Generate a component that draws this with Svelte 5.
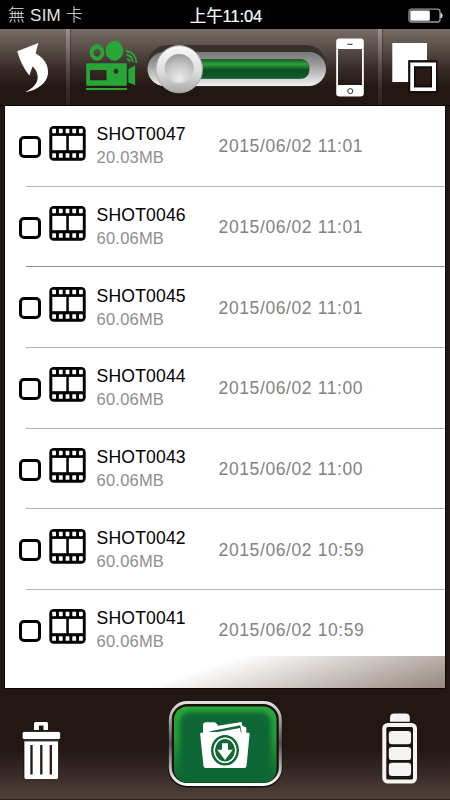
<script>
    let shots = [
        { name: 'SHOT0047', size: '20.03MB', date: '2015/06/02 11:01' },
        { name: 'SHOT0046', size: '60.06MB', date: '2015/06/02 11:01' },
        { name: 'SHOT0045', size: '60.06MB', date: '2015/06/02 11:01' },
        { name: 'SHOT0044', size: '60.06MB', date: '2015/06/02 11:00' },
        { name: 'SHOT0043', size: '60.06MB', date: '2015/06/02 11:00' },
        { name: 'SHOT0042', size: '60.06MB', date: '2015/06/02 10:59' },
        { name: 'SHOT0041', size: '60.06MB', date: '2015/06/02 10:59' },
    ];
    let selected = {};

    const holes = [0, 1, 2, 3, 4];

    function toggle(name){
        selected[name] = !selected[name];
    }
</script>

<div class="screen">
    <div class="status">
        <span class="carrier">無 SIM 卡</span>
        <span class="time">上午11:04</span>
        <svg class="power" width="36" height="16" viewBox="0 0 36 16">
            <rect x="1" y="1.2" width="31" height="12.8" rx="2.5" fill="none" stroke="#9b9b9b" stroke-width="1.3"/>
            <rect x="2.3" y="2.6" width="19.5" height="10.2" rx="1" fill="#fff"/>
            <path d="M33 5.2q2.6 2.4 0 4.8z" fill="#ddd" stroke="#ddd"/>
        </svg>
    </div>

    <header>
        <button class="back" title="Back">
            <svg width="66" height="76" viewBox="0 29 66 76">
                <path d="M17.3 51.3L38.3 43L35.6 53.5C44 58 48.6 65 48 73.5C47.2 83 37 90.5 25 92.3C34 87.5 38 83 37.7 76.5C37.4 72 35.5 69 32.5 66.5L29.3 75.5Q20.8 65 17.3 51.3z" fill="#fff"/>
            </svg>
        </button>
        <i class="divider"></i>
        <div class="source">
            <svg class="camera" width="76" height="76" viewBox="71 29 76 76">
                <g fill="#27a737">
                    <path fill-rule="evenodd" d="M97 44.3a7.3 8.2 0 1 0 .01 0zM97 48.8a3.6 4 0 1 1-.01 0z"/>
                    <ellipse cx="114.4" cy="50.8" rx="8.7" ry="10"/>
                    <path fill-rule="evenodd" d="M87 63.3h39q.8 0 .8.8v20.8q0 .8-.8.8H87q-.8 0-.8-.8V64.1q0-.8.8-.8zM90 70v10.3h16.5V70zM116 68.7a2.4 2.5 0 1 0 .01 0z"/>
                    <path d="M128.3 69l6.8-3.5V85l-6.8-2.5z"/>
                    <rect x="86" y="88" width="41" height="2"/>
                </g>
                <g fill="none" stroke="#27a737" stroke-width="1.8">
                    <path d="M126 51c6 .5 10 5 10.4 12"/>
                    <path d="M126.5 55c4 .4 6 3 6.2 7"/>
                    <path d="M127 59q2.3.2 2.4 2.8"/>
                </g>
            </svg>
            <svg class="slider" width="184" height="76" viewBox="147 29 184 76">
                <defs>
                    <linearGradient id="rim" x1="0" y1="0" x2="0" y2="1">
                        <stop offset="0" stop-color="#777"/>
                        <stop offset=".35" stop-color="#999"/>
                        <stop offset=".75" stop-color="#d0d0d0"/>
                        <stop offset="1" stop-color="#f2f2f2"/>
                    </linearGradient>
                    <linearGradient id="fill" x1="0" y1="0" x2="0" y2="1">
                        <stop offset="0" stop-color="#155c29"/>
                        <stop offset=".25" stop-color="#2aa438"/>
                        <stop offset=".55" stop-color="#104b24"/>
                        <stop offset="1" stop-color="#08622f"/>
                    </linearGradient>
                    <linearGradient id="knob" x1="0" y1="0" x2="0" y2="1">
                        <stop offset="0" stop-color="#fafafa"/>
                        <stop offset=".6" stop-color="#d9d9d9"/>
                        <stop offset="1" stop-color="#a9aaaa"/>
                    </linearGradient>
                    <radialGradient id="dish" cx=".5" cy=".85" r=".85">
                        <stop offset="0" stop-color="#ececec"/>
                        <stop offset=".6" stop-color="#c3c5c4"/>
                        <stop offset="1" stop-color="#999c9a"/>
                    </radialGradient>
                </defs>
                <rect x="147.5" y="45" width="178.5" height="41.5" rx="20" fill="#38302d"/>
                <rect x="147.5" y="52" width="178.5" height="34" rx="17" fill="url(#rim)"/>
                <rect x="165" y="59.5" width="144" height="19" rx="8" fill="url(#fill)" stroke="#164522" stroke-width=".6"/>
                <ellipse cx="179.2" cy="69.2" rx="23.3" ry="23.6" fill="url(#knob)" stroke="#aaa" stroke-width="1"/>
                <circle cx="179.2" cy="68.6" r="14.5" fill="url(#dish)"/>
            </svg>
            <svg class="phone" width="46" height="76" viewBox="331 29 46 76">
                <path fill="#fff" fill-rule="evenodd" d="M339.5 38.5h21q3.3 0 3.3 3.3v51.4q0 3.3-3.3 3.3h-21q-3.3 0-3.3-3.3V41.8q0-3.3 3.3-3.3zM338 49v36h24V49z"/>
                <path d="M347.5 44.3h5" stroke="#41332e" stroke-width="1.1"/>
                <circle cx="350.3" cy="91.1" r="2.5" fill="none" stroke="#33302f" stroke-width="1"/>
            </svg>
        </div>
        <i class="divider"></i>
        <button class="select" title="Select">
            <svg width="67" height="76" viewBox="383 29 67 76">
                <path d="M392.3 43H427v17.5h-18.5V82h-16.2z" fill="#fff"/>
                <rect x="408.2" y="60.2" width="29.3" height="33" fill="#150e0c"/>
                <path fill="#fff" fill-rule="evenodd" d="M410.3 62.5H436V91h-25.7zM414 66.5v20.7h18V66.5z"/>
                <path fill="#0f0a09" fill-rule="evenodd" d="M414 66.5h18v20.7h-18zM415.6 68.2V85.5h15V68.2z"/>
                <rect x="415.6" y="68.2" width="15" height="17.3" fill="#281b17"/>
            </svg>
        </button>
    </header>

    <main>
        {#each shots as shot}
            <div class="row">
                <button class="check" class:on={selected[shot.name]} title={shot.name} on:click={() => toggle(shot.name)}></button>
                <svg class="film" width="37" height="35" viewBox="0 0 37 35">
                    <rect x=".3" y="0" width="36.4" height="34.8" rx="4.5"/>
                    <g fill="#fff">
                        <rect x="3.3" y="9.9" width="14" height="14.3"/>
                        <rect x="19.8" y="9.9" width="14" height="14.3"/>
                        {#each holes as i}
                            <rect x={3.2 + i * 6.7} y="2.8" width="3.8" height="4.4" rx=".6"/>
                            <rect x={3.2 + i * 6.7} y="27.2" width="3.8" height="4.6" rx=".6"/>
                        {/each}
                    </g>
                </svg>
                <div class="info">
                    <span class="name">{shot.name}</span>
                    <span class="size">{shot.size}</span>
                </div>
                <span class="date">{shot.date}</span>
            </div>
        {/each}
        <div class="shine"></div>
    </main>

    <footer>
        <button title="Delete">
            <svg width="80" height="112" viewBox="0 688 80 112">
                <path d="M34 730v-6.5q0-1.5 1.5-1.5h11q1.5 0 1.5 1.5v6.5h-4.5v-4.5h-4.6v4.5z" fill="#fff"/>
                <rect x="22.2" y="731.5" width="38.3" height="8" rx="2" fill="#fff" stroke="#090504" stroke-width=".7"/>
                <path d="M24 741h34.5v36.5q0 2-2 2H26q-2 0-2-2z" fill="#fff" stroke="#090504" stroke-width=".7"/>
                <path d="M24.5 741.3h33.5" stroke="#aaa"/>
                <path d="M31.5 745v29.5M41.3 745v29.5M50.8 745v29.5" stroke="#241813" stroke-width="2.3"/>
            </svg>
        </button>
        <button title="Download">
            <svg width="122" height="112" viewBox="164 688 122 112">
                <defs>
                    <linearGradient id="chrome" x1="0" y1="0" x2="0" y2="1">
                        <stop offset="0" stop-color="#e0dfdf"/>
                        <stop offset=".25" stop-color="#9a9694"/>
                        <stop offset=".5" stop-color="#57514f"/>
                        <stop offset=".75" stop-color="#a9a6a5"/>
                        <stop offset="1" stop-color="#fff"/>
                    </linearGradient>
                    <linearGradient id="bevel" x1="0" y1="0" x2="0" y2="1">
                        <stop offset="0" stop-color="#2aa737"/>
                        <stop offset=".4" stop-color="#269b37"/>
                        <stop offset="1" stop-color="#0e6434"/>
                    </linearGradient>
                    <filter id="soft"><feGaussianBlur stdDeviation="2.2"/></filter>
                    <clipPath id="face"><rect x="174" y="706.5" width="102.5" height="76" rx="13"/></clipPath>
                </defs>
                <rect x="168" y="701" width="114.5" height="86.5" rx="19" fill="#160e0b"/>
                <rect x="170.3" y="702.5" width="110" height="82" rx="17" fill="#17100e" stroke="url(#chrome)" stroke-width="3"/>
                <rect x="174" y="706.5" width="102.5" height="76" rx="13" fill="url(#bevel)"/>
                <g clip-path="url(#face)">
                    <rect x="180" y="712" width="91" height="76" rx="10" fill="#116836" filter="url(#soft)"/>
                </g>
                <path d="M203 733v-7.5q0-3.3 3-3.3h8q2 0 3 2l1 1.5L241.5 722l1 4 3.8 1.5v6z" fill="#fff"/>
                <path d="M208 731.7L240.2 725.2l1.3 7.3H222z" fill="#116836"/>
                <path d="M212 733l28-5 1 6z" fill="#fff"/>
                <path d="M201.5 732.8h46.8q1.5 0 1.3 1.6L246.5 766q-.2 2-2.2 2h-38.6q-2 0-2.2-2L200.2 734.4q-.2-1.6 1.3-1.6z" fill="#fff"/>
                <ellipse cx="225" cy="750.3" rx="12.7" ry="14" fill="none" stroke="#116836" stroke-width="2.6"/>
                <ellipse cx="225" cy="750.3" rx="10.2" ry="11.5" fill="#116836"/>
                <path d="M222 743.3h6v6.5h4.7L225 760l-7.7-10.2h4.7z" fill="#fff"/>
                <ellipse cx="225" cy="750.3" rx="10.7" ry="12" fill="none" stroke="#fff" stroke-width="1.3"/>
            </svg>
        </button>
        <button title="Battery">
            <svg width="80" height="112" viewBox="370 688 80 112">
                <path d="M390 721.8v-4q0-4.3 4.3-4.3h11.2q4.3 0 4.3 4.3v4z" fill="#f4f4f4"/>
                <rect x="384.3" y="725" width="30.7" height="56.5" rx="3.5" fill="#1d110e" stroke="#f4f4f4" stroke-width="4"/>
                <rect x="388.8" y="731" width="22.3" height="13.2" rx="3.2" fill="#f4f4f4"/>
                <rect x="388.8" y="746.9" width="22.3" height="13.2" rx="3.2" fill="#f4f4f4"/>
                <rect x="388.8" y="762.8" width="22.3" height="13.2" rx="3.2" fill="#f4f4f4"/>
            </svg>
        </button>
    </footer>
</div>

<style>
    :global(body){
        margin: 0;
        background: #000;
    }
    .screen{
        width: 450px;
        height: 800px;
        display: flex;
        flex-direction: column;
        overflow: hidden;
        background: #231713;
        font-family: "Liberation Sans", "Noto Sans CJK TC", sans-serif;
    }
    button{
        border: 0;
        padding: 0;
        margin: 0;
        background: none;
    }
    svg{
        display: block;
        flex: none;
    }

    .status{
        height: 29px;
        flex: none;
        display: grid;
        grid-template-columns: 1fr auto 1fr;
        align-items: center;
        box-sizing: border-box;
        padding: 2px 6px 0 8px;
        background: #000;
        color: #fff;
        font-size: 17px;
        line-height: 26px;
        white-space: nowrap;
    }
    .carrier{
        color: #e2e2e2;
        font-weight: 300;
        letter-spacing: 0.2px;
    }
    .time{
        font-size: 16.5px;
        letter-spacing: -0.1px;
        -webkit-text-stroke: 0.2px #fff;
    }
    .power{
        justify-self: end;
    }

    header{
        height: 77px;
        flex: none;
        display: flex;
        box-sizing: border-box;
        border-bottom: 1px solid #000;
        background: linear-gradient(#786c67, #5a4e49 25%, #3b2e2a 50%, #231713 76%);
    }
    .divider{
        width: 5px;
        flex: none;
        background: linear-gradient(90deg, #ffffff40 0 75%, #00000050 75%);
        -webkit-mask-image: linear-gradient(#000, #0003);
        mask-image: linear-gradient(#000, #0003);
    }
    .source{
        display: flex;
        flex: 1;
    }

    main{
        height: 582px;
        flex: none;
        position: relative;
        display: flex;
        flex-direction: column;
        box-sizing: border-box;
        margin: 0 5px;
        overflow: hidden;
        background: #fff;
        box-shadow: 0 0 0 1px #0c0706;
    }
    .row{
        height: 80.65px;
        flex: none;
        display: flex;
        align-items: flex-start;
        box-sizing: border-box;
        margin-left: 21px;
        border-bottom: 1px solid #b4b4b4;
    }
        .row:nth-child(2){
            border-color: #8d8d8d;
        }
        .row:nth-child(7){
            border-color: transparent;
        }
    .check{
        width: 22px;
        height: 22px;
        flex: none;
        box-sizing: border-box;
        margin: 30px 8.5px 0 -7.5px;
        border: 3px solid #000;
        border-radius: 5px;
    }
        .check.on{
            background: #27a737;
        }
    .film{
        margin-top: 19.5px;
    }
    .info{
        width: 122px;
        flex: none;
        display: flex;
        flex-direction: column;
        margin: 16.4px 0 0 10.6px;
    }
    .name{
        font-size: 17.6px;
        line-height: 24px;
        color: #000;
        letter-spacing: 0.15px;
    }
    .size{
        font-size: 16.5px;
        line-height: 23px;
        color: #8e8e8e;
        letter-spacing: 0.2px;
    }
    .date{
        margin-top: 28.4px;
        font-size: 17.5px;
        line-height: 24px;
        color: #828282;
        letter-spacing: 0.6px;
        white-space: nowrap;
    }
    /* reflection over the bottom edge of the list */
    .shine{
        position: absolute;
        left: 0;
        right: 0;
        bottom: 0;
        height: 32px;
        background: linear-gradient(162deg, #8b7b7200 44%, #8b7b7218 50%, #8b7b72e8 100%);
    }

    footer{
        height: 112px;
        flex: none;
        display: flex;
        justify-content: space-between;
        box-sizing: border-box;
        background: linear-gradient(#231713 55%, #3a2d29 80%, #50423b);
        border-bottom: 1px solid #2d211d;
    }
</style>
